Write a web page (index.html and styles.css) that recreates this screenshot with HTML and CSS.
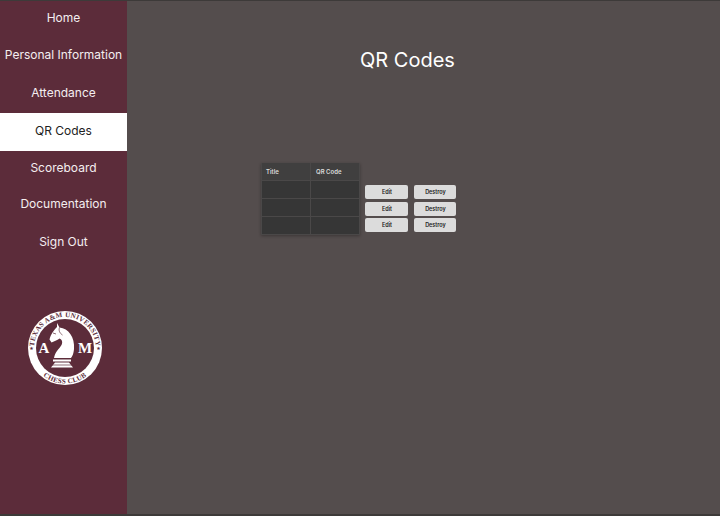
FILE: index.html
```html
<!DOCTYPE html>
<html lang="en">
<head>
    <meta charset="UTF-8">
    <meta name="viewport" content="width=device-width, initial-scale=1.0">
    <title>QR Codes</title>
    <link rel="stylesheet" href="styles.css">
</head>
<body>
    <div class="page">
        <nav class="sidebar">
            <a class="nav-item item-home" href="#">Home</a>
            <a class="nav-item item-personal" href="#">Personal Information</a>
            <a class="nav-item item-attendance" href="#">Attendance</a>
            <a class="nav-item item-active" href="#">QR Codes</a>
            <a class="nav-item item-score" href="#">Scoreboard</a>
            <a class="nav-item item-docs" href="#">Documentation</a>
            <a class="nav-item item-signout" href="#">Sign Out</a>

            <svg class="logo" viewBox="0 0 74 74" width="74" height="74">
                <defs>
                    <path id="arc-top" d="M6 37a31 31 0 0 1 62 0"></path>
                    <path id="arc-bottom" d="M1.500 37a35.500 35.500 0 0 0 71 0"></path>
                </defs>
                <circle class="logo-white" cx="37" cy="37" r="37"></circle>
                <circle class="logo-dark" cx="37" cy="37" r="29"></circle>
                <text class="logo-ring"><textPath href="#arc-top" startOffset="50%">TEXAS A&amp;M UNIVERSITY</textPath></text>
                <text class="logo-ring"><textPath href="#arc-bottom" startOffset="50%">CHESS CLUB</textPath></text>
                <text class="logo-star" x="3.500" y="39">★</text>
                <text class="logo-star" x="70.500" y="39">★</text>
                <text class="logo-letter" x="16" y="42">A</text>
                <text class="logo-letter" x="57" y="42">M</text>
                <path class="logo-white" d="M29 12l2.500 4.500c9 1 15.500 9.500 14.500 21.500-.5 5-1.500 7-3 9H26c1-6 5-9 7.500-13 1.500-3 .5-5.500-2-6.500-1.500 1-5 3-8 4l-2-3c1-5 5-10 7.500-12.500z"></path>
                <path class="logo-white" d="M25 48.500h18v2H25zM27 51.500h14l4 5H23z"></path>
                <path class="logo-line" d="M31.500 16.500c-1 3 0 5.500 3 7.500M25 22l3 1M24 54h20"></path>
            </svg>
        </nav>

        <main class="content">
            <h1 class="title">QR Codes</h1>
            <div class="listing">
                <table class="codes">
                    <thead>
                        <tr><th>Title</th><th>QR Code</th></tr>
                    </thead>
                    <tbody>
                        <tr><td></td><td></td></tr>
                        <tr><td></td><td></td></tr>
                        <tr><td></td><td></td></tr>
                    </tbody>
                </table>
                <div class="actions">
                    <button>Edit</button><button>Destroy</button>
                    <button>Edit</button><button>Destroy</button>
                    <button>Edit</button><button>Destroy</button>
                </div>
            </div>
        </main>
    </div>
</body>
</html>
```

FILE: styles.css
```css
body {
    margin: 0;
    font-family: Inter, "Liberation Sans", sans-serif;
    background-color: #3d3a39;
}

.page {
    display: flex;
    height: 513px;
    padding: 1px 0 2px;
}

/* sidebar */
.sidebar {
    width: 127px;
    flex-shrink: 0;
    display: flex;
    flex-direction: column;
    background-color: #5c2c3a;
}

.nav-item {
    display: flex;
    justify-content: center;
    align-items: center;
    box-sizing: border-box;
    color: #f4eef0;
    font-size: 12px;
    text-decoration: none;
    white-space: nowrap;
}

.item-home {
    height: 33px;
}

.item-personal {
    height: 40px;
}

.item-attendance {
    height: 38px;
    padding-bottom: 2px;
}

.item-active {
    height: 38px;
    padding-bottom: 4px;
    margin-top: 1px;
    background-color: #fff;
    color: #222;
}

.item-score {
    height: 33px;
}

.item-docs {
    height: 39px;
}

.item-signout {
    height: 37px;
}

.logo {
    align-self: flex-start;
    margin: 51px 0 0 28px;
}

.logo-white {
    fill: #fff;
}

.logo-dark {
    fill: #5c2c3a;
}

.logo-line {
    fill: none;
    stroke: #5c2c3a;
    stroke-width: 0.7;
}

.logo-ring {
    fill: #5c2c3a;
    font-family: "Liberation Serif", serif;
    font-size: 7px;
    font-weight: bold;
    letter-spacing: 0.3px;
    text-anchor: middle;
}

.logo-star {
    fill: #5c2c3a;
    font-family: "DejaVu Sans", sans-serif;
    font-size: 5px;
    text-anchor: middle;
}

.logo-letter {
    fill: #fff;
    font-family: "Liberation Serif", serif;
    font-size: 15px;
    font-weight: bold;
    text-anchor: middle;
}

/* main area */
.content {
    flex: 1;
    background-color: #544d4d;
}

.title {
    margin: 47px 0 0 233px;
    color: #fff;
    font-size: 20px;
    font-weight: 400;
    line-height: 25px;
}

.listing {
    display: flex;
    align-items: flex-start;
    gap: 5px;
    margin: 90px 0 0 134px;
}

.codes {
    width: 99px;
    table-layout: fixed;
    border-collapse: collapse;
    background-color: #363636;
    box-shadow: 0 1px 3px rgba(0, 0, 0, 0.3);
}

.codes th,
.codes td {
    height: 17px;
    padding: 0 0 0 5px;
    border: 1px solid #4a4848;
    border-top: none;
    text-align: left;
    font-size: 6px;
    font-weight: 600;
    color: #dcdcdc;
}

.codes th {
    background-color: #403f3f;
}

.codes th:first-child {
    padding-left: 4px;
}

.actions {
    display: grid;
    grid-template-columns: 43px 42px;
    column-gap: 6px;
    row-gap: 2.5px;
    margin-top: 22px;
}

.actions button {
    height: 14px;
    padding: 0 0 0 1px;
    border: none;
    border-radius: 2px;
    background-color: #dcdcdc;
    color: #222;
    font-family: Inter, "Liberation Sans", sans-serif;
    font-size: 5.500px;
    font-weight: 600;
}
```
